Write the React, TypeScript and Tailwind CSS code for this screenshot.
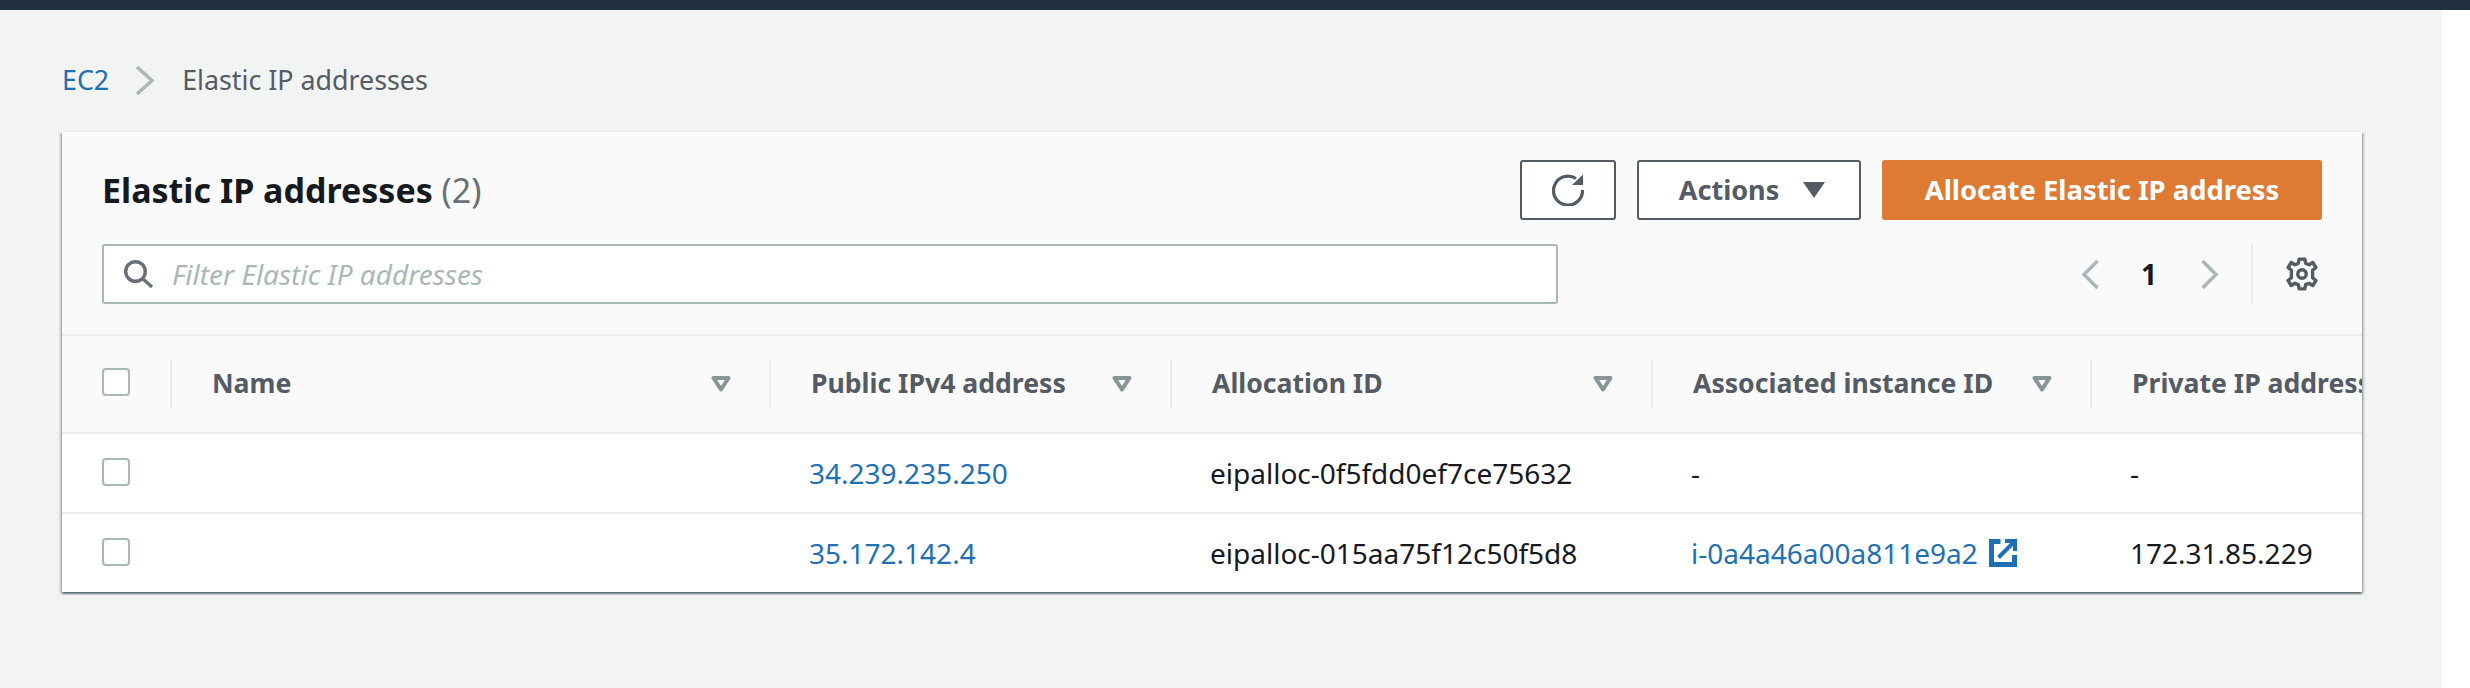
const ink = 'text-[#16191f]';
const link = 'text-[#1f6fb5]';

function SortIcon() {
  return (
    <svg width="20" height="16" viewBox="0 0 20 16" className="shrink-0">
      <path d="M2.5 2h15L10 13.5z" fill="none" stroke="#879596" strokeWidth="4" strokeLinejoin="round" />
    </svg>
  );
}

function Checkbox() {
  return <div className="h-7 w-7 rounded-[4px] border-2 border-[#aab7b8] bg-white" />;
}

function HeaderCell({ label, hasSort = true }: { label: string; hasSort?: boolean }) {
  return (
    <div className="flex h-12 items-center justify-between border-l-2 border-[#eaeded] pl-10 pr-[38px]">
      <span className="whitespace-nowrap text-[26.6px] font-bold text-[#545b64]">{label}</span>
      {hasSort && <SortIcon />}
    </div>
  );
}

function Chevron({ dir }: { dir: 'left' | 'right' }) {
  return (
    <svg width="19" height="31" viewBox="0 0 19 31">
      <path
        d={dir === 'left' ? 'M16.5 2 3 15.5 16.5 29' : 'M2.5 2 16 15.5 2.5 29'}
        fill="none"
        stroke="#aab7b8"
        strokeWidth="3.5"
      />
    </svg>
  );
}

function Row({ ip, alloc, instance, priv }: { ip: string; alloc: string; instance?: string; priv: string }) {
  return (
    <div className="grid h-20 grid-cols-[108px_599px_401px_481px_439px_300px] items-center border-t-2 border-[#eaeded] bg-white text-[28px]">
      <div className="pb-[2px] pl-10">
        <Checkbox />
      </div>
      <div />
      <div className={`pl-10 ${link}`}>{ip}</div>
      <div className={`pl-10 ${ink}`}>{alloc}</div>
      <div className={`flex items-center gap-[11px] pl-10 ${instance ? link : ink}`}>
        {instance ?? '-'}
        {instance && (
          <svg width="28" height="28" viewBox="0 0 28 28">
            <path d="M11.5 2.5h-9v23h23v-9.5" fill="none" stroke="#1f6fb5" strokeWidth="5" />
            <path d="M16 2h10v10" fill="none" stroke="#1f6fb5" strokeWidth="4" />
            <path d="M25 3 9.5 18.5" fill="none" stroke="#1f6fb5" strokeWidth="4" />
          </svg>
        )}
      </div>
      <div className={`whitespace-nowrap pl-10 ${ink}`}>{priv}</div>
    </div>
  );
}

export default function App() {
  return (
    <div className="h-[688px] overflow-hidden bg-white font-['Noto_Sans',sans-serif]">
      <div className="h-[10px] bg-[#232f3e]" />
      <main className="h-[678px] w-[2442px] bg-[#f2f3f3] pl-[62px] pt-[50px]">
        <nav className="flex h-10 items-center text-[26.8px]">
          <span className={link}>EC2</span>
          <svg width="22" height="31" viewBox="0 0 22 31" className="ml-[25px] mr-[26px]">
            <path d="M3 2 18 15.5 3 29" fill="none" stroke="#aab7b8" strokeWidth="3.5" />
          </svg>
          <span className="text-[#545b64]">Elastic IP addresses</span>
        </nav>
        <section className="mt-[32px] h-[460px] w-[2300px] overflow-hidden bg-[#fafafa] shadow-[0_2px_2px_0_rgba(0,28,36,0.5),2px_1px_2px_0_rgba(0,28,36,0.2),-2px_1px_2px_0_rgba(0,28,36,0.2)]">
          <header className="h-[204px] border-b-2 border-[#eaeded] pl-10 pr-10">
            <div className="flex items-start justify-between pt-7">
              <h1 className={`pt-[10px] text-[34px] font-bold leading-10 ${ink}`}>
                Elastic IP addresses <span className="font-normal text-[#687078]">(2)</span>
              </h1>
              <div className="flex gap-[21px]">
                <button className="flex h-[60px] w-[96px] items-center justify-center rounded-[3px] border-2 border-[#545b64] bg-white">
                  <svg width="32" height="32" viewBox="0 0 32 32">
                    <path d="M24 4.5A14.5 14.5 0 1 0 30.5 16" fill="none" stroke="#545b64" strokeWidth="3.2" />
                    <path d="M31 .5v10.5H20z" fill="#545b64" />
                  </svg>
                </button>
                <button className="flex h-[60px] w-[224px] items-center justify-center gap-6 rounded-[3px] border-2 border-[#545b64] bg-white pl-[6px] text-[27px] font-bold text-[#545b64]">
                  Actions
                  <svg width="22" height="16" viewBox="0 0 22 16">
                    <path d="M0 0h22L11 16z" fill="#545b64" />
                  </svg>
                </button>
                <button className="h-[60px] w-[440px] rounded-[3px] bg-[#df7a35] text-[27.4px] font-bold text-white">
                  Allocate Elastic IP address
                </button>
              </div>
            </div>
            <div className="mt-6 flex items-center justify-between pr-[3px]">
              <div className="flex h-[60px] w-[1456px] items-center gap-[18px] rounded-[3px] border-2 border-[#aab7b8] bg-white pl-5">
                <svg width="30" height="28" viewBox="0 0 30 28" fill="none" stroke="#687078" strokeWidth="3.4">
                  <circle cx="11.5" cy="11.5" r="9.8" />
                  <path d="M18.5 18.5 28 27" />
                </svg>
                <span className="text-[28px] italic text-[#aab7b8]">Filter Elastic IP addresses</span>
              </div>
              <div className="flex h-[60px] items-center">
                <Chevron dir="left" />
                <span className={`ml-[41px] mr-[43px] text-[28px] font-bold ${ink}`}>1</span>
                <Chevron dir="right" />
                <div className="ml-8 h-full border-l-2 border-[#eaeded]" />
                <svg width="34" height="34" viewBox="0 0 24 24" className="ml-8" fill="none" stroke="#545b64" strokeWidth="2.4" strokeLinejoin="round">
                  <circle cx="12" cy="12" r="3" />
                  <path d="M10 1.5h4l.6 3 2.4 1 2.6-1.6 2.2 3.5-2.3 2v5.2l2.3 2-2.2 3.5-2.6-1.6-2.4 1-.6 3h-4l-.6-3-2.4-1-2.6 1.6-2.2-3.5 2.3-2V9.4l-2.3-2 2.2-3.5 2.6 1.6 2.4-1z" />
                </svg>
              </div>
            </div>
          </header>
          <div className="grid h-[96px] grid-cols-[108px_599px_401px_481px_439px_300px] items-center bg-[#fafafa]">
            <div className="pb-1 pl-10">
              <Checkbox />
            </div>
            <HeaderCell label="Name" />
            <HeaderCell label="Public IPv4 address" />
            <HeaderCell label="Allocation ID" />
            <HeaderCell label="Associated instance ID" />
            <HeaderCell label="Private IP address" hasSort={false} />
          </div>
          <Row ip="34.239.235.250" alloc="eipalloc-0f5fdd0ef7ce75632" priv="-" />
          <Row ip="35.172.142.4" alloc="eipalloc-015aa75f12c50f5d8" instance="i-0a4a46a00a811e9a2" priv="172.31.85.229" />
        </section>
      </main>
    </div>
  );
}
